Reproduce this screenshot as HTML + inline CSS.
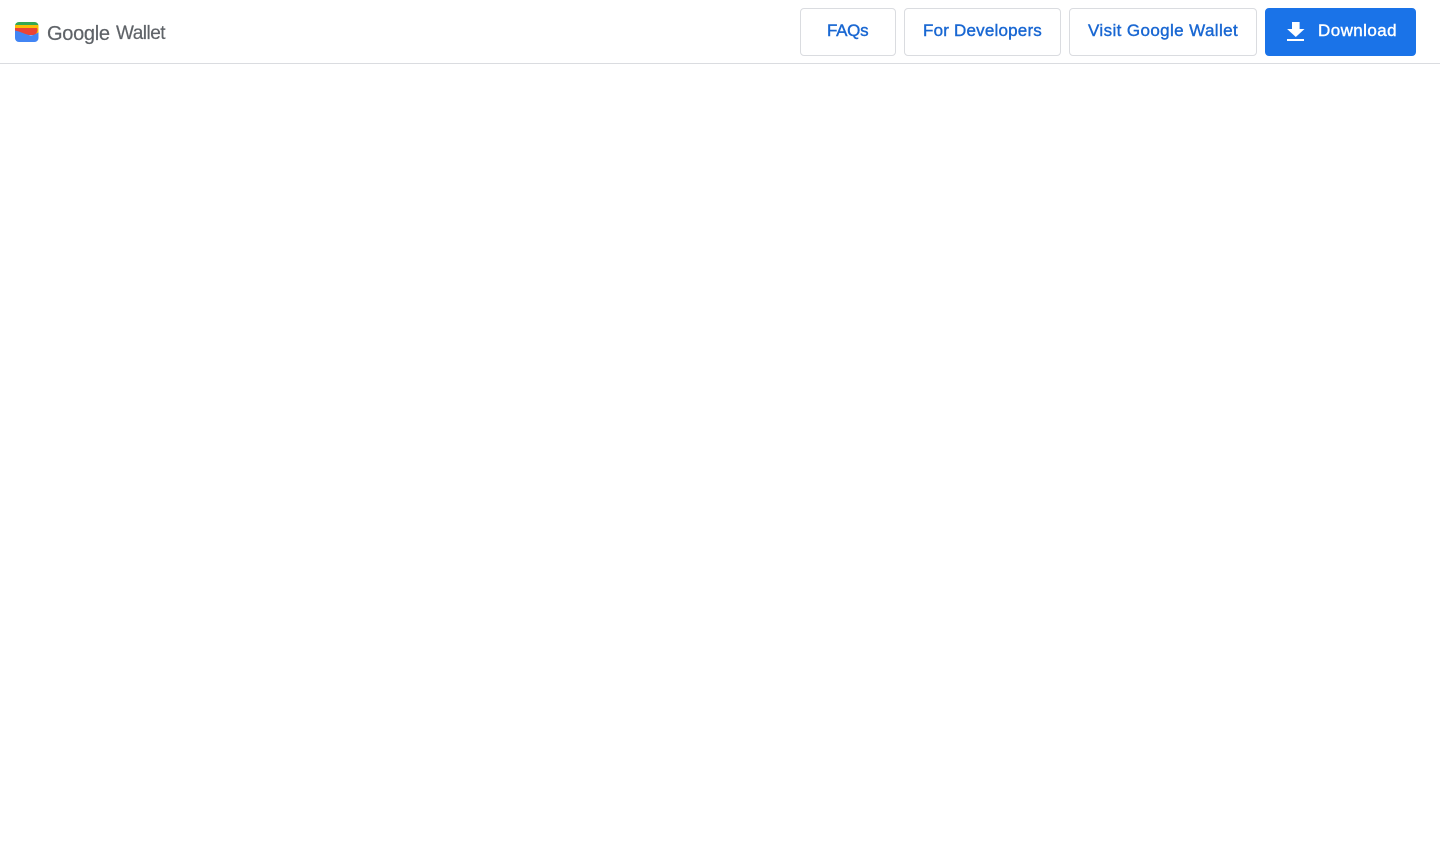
<!DOCTYPE html>
<html lang="en">
<head>
<meta charset="utf-8">
<title>Google Wallet</title>
<style>
html,body{margin:0;padding:0;background:#fff;width:1440px;height:862px;overflow:hidden;font-family:"Liberation Sans",sans-serif}
header{position:absolute;left:0;top:0;width:1440px;height:63px;border-bottom:1px solid #dadce0;background:#fff}
.logo{position:absolute;left:15px;top:22px;width:24px;height:20px}
.w{position:absolute;top:21px;font-size:20px;line-height:26px;color:#5f6368;white-space:nowrap;-webkit-text-stroke:.2px currentColor}
.btn{position:absolute;top:8px;height:48px;box-sizing:border-box;border:1px solid #dadce0;border-radius:4px;background:#fff;color:#1967d2;text-decoration:none;font-size:17px;line-height:43px;white-space:nowrap;-webkit-text-stroke:.4px currentColor}
.btn span{position:absolute;top:0}
.dl{background:#1a73e8;border-color:#1a73e8;color:#fff}
.dl svg{position:absolute;left:18px;top:11px}
</style>
</head>
<body>
<header>
<svg class="logo" viewBox="0 0 24 20" aria-hidden="true">
<defs><clipPath id="c"><rect width="23.500" height="20" rx="4"/></clipPath></defs>
<g clip-path="url(#c)">
<rect width="24" height="4" fill="#34a853"/>
<rect y="3" width="24" height="9" fill="#fbbc04"/>
<path d="M0 6H22C23 8 22 11 20 13H0Z" fill="#ea4335"/>
<path d="M0 8.500C5 9.500 11 12.500 15 13.300C18 13.600 21 12 24 10V20H0Z" fill="#4285f4"/>
</g>
</svg>
<span class="w" style="left:47px;letter-spacing:-.3px">Google</span>
<span class="w" style="left:116px;font-size:19px;letter-spacing:-.5px">Wallet</span>
<a class="btn" href="#" style="left:800px;width:96px"><span style="left:26px;letter-spacing:-.3px">FAQs</span></a>
<a class="btn" href="#" style="left:904px;width:157px"><span style="left:18px;letter-spacing:.2px">For Developers</span></a>
<a class="btn" href="#" style="left:1069px;width:188px"><span style="left:18px;letter-spacing:.39px">Visit Google Wallet</span></a>
<a class="btn dl" href="#" style="left:1265px;width:151px">
<svg width="24" height="24" viewBox="0 0 24 24" aria-hidden="true"><path d="M8 2h7.600v7h4.900L11.800 17 3.100 9H8z M3 19h17v2H3z" fill="#fff"/></svg>
<span style="left:52px;letter-spacing:.42px">Download</span></a>
</header>
</body>
</html>
